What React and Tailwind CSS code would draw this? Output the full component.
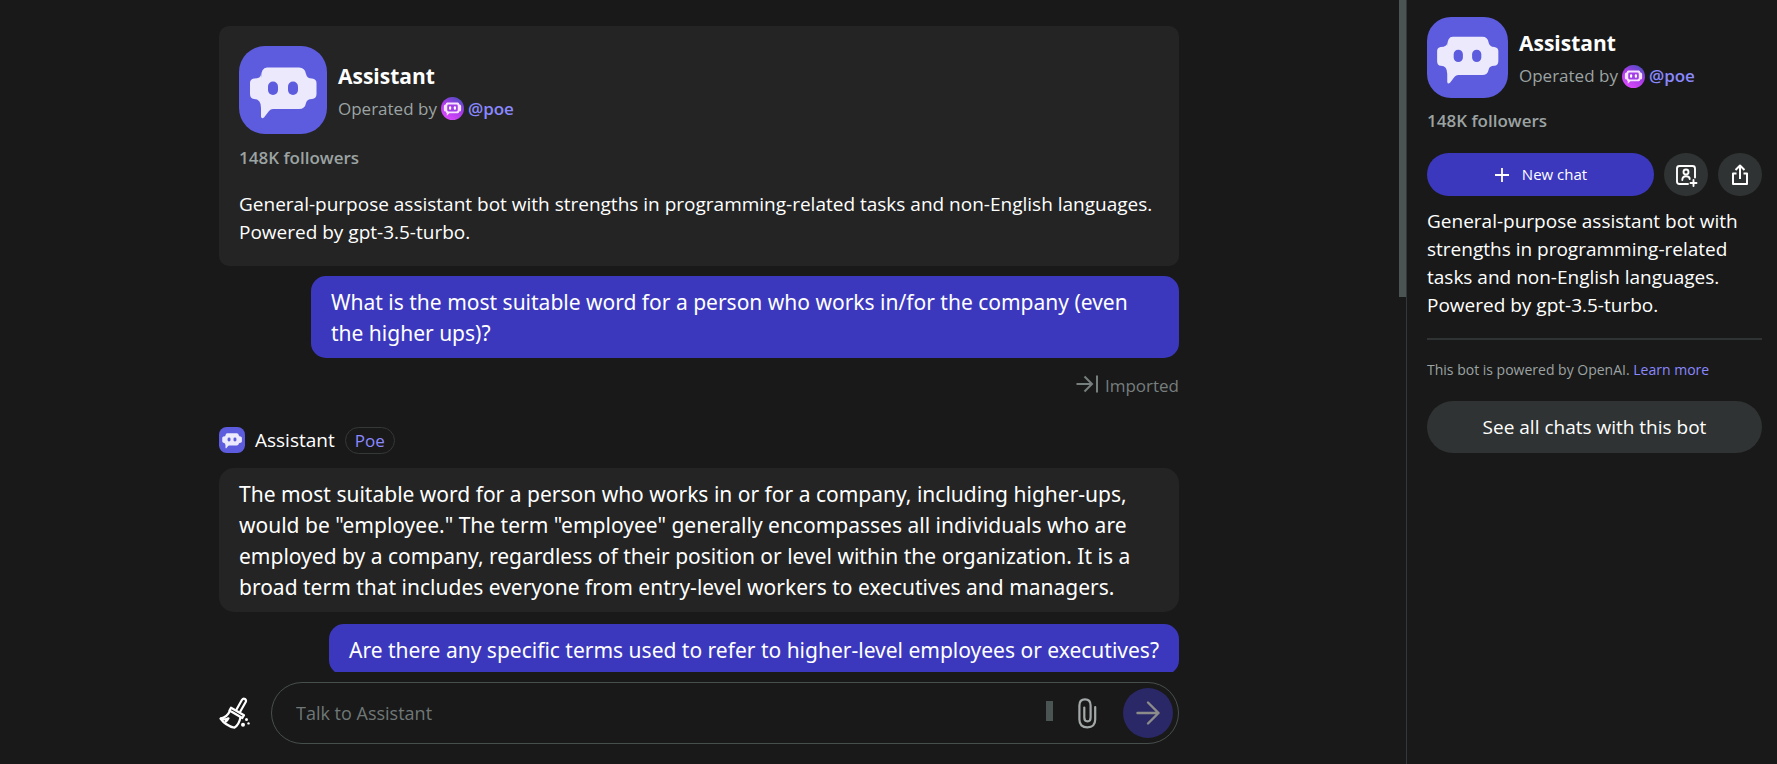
const face =
  "M22 32Q22 21.500 28 21.500H60Q66 21.500 67 28Q68 32.500 73 32.500Q77.500 33 77.500 37V48Q77.500 52.500 73 53Q68 53 67 57Q66 63 60 63H34Q31.500 63 30 65L25 71.500Q22.500 73.500 22 70.500V62Q22 53 15 53Q11 52.500 11 48V37Q11 33 15 32.500Q22 32.500 22 28Z";

function BotAvatar({ className }) {
  return (
    <svg viewBox="0 0 88 88" className={className} aria-hidden="true">
      <rect width="88" height="88" rx="26" fill="#5d5cde" />
      <path d={face} fill="#ebe9fb" />
      <rect x="29" y="35.500" width="10" height="13.500" rx="5" fill="#5d5cde" />
      <rect x="49" y="35.500" width="10" height="13.500" rx="5" fill="#5d5cde" />
    </svg>
  );
}

function PoeLogo() {
  return (
    <svg viewBox="0 0 24 24" className="h-[23px] w-[23px] shrink-0" aria-hidden="true">
      <defs>
        <linearGradient id="poe" x1="0.2" y1="1" x2="0.8" y2="0">
          <stop offset="0" stopColor="#e04bff" />
          <stop offset="0.55" stopColor="#a63be6" />
          <stop offset="1" stopColor="#4b4fc4" />
        </linearGradient>
      </defs>
      <circle cx="12" cy="12" r="12" fill="url(#poe)" />
      <path
        d="M6.500 5.800H17.500Q19 5.800 19 7.600Q21 8 21 9.500V13.500Q21 15 19 15.200Q19 17 17.500 17H8.800L6 19.500V17Q5 16.500 5 15.200Q3 15 3 13.500V9.500Q3 8 5 7.600Q5 5.800 6.500 5.800Z"
        fill="#f6e4ff"
      />
      <rect x="6.500" y="7.800" width="11" height="7.200" rx="1.500" fill="#a23fe6" />
      <rect x="8.400" y="9.600" width="2.200" height="3.600" rx="1" fill="#fff" />
      <rect x="13.400" y="9.600" width="2.200" height="3.600" rx="1" fill="#fff" />
    </svg>
  );
}

function BotHeader({ avatarClass }) {
  return (
    <div className="flex items-center gap-[11px]">
      <BotAvatar className={avatarClass} />
      <div className="pt-1">
        <h2 className="text-[21px] leading-[33px] font-bold text-white">Assistant</h2>
        <p className="flex items-center gap-1 text-[17px] leading-[32px] text-[#9ca3a3]">
          Operated by
          <PoeLogo />
          <a href="#poe" className="font-semibold text-[#8a88ff]">@poe</a>
        </p>
      </div>
    </div>
  );
}

function UserBubble({ children }) {
  return (
    <div className="ml-auto w-fit max-w-[868px] rounded-[15px] bg-[#3b38be] px-5 pt-[11px] pb-[9px] font-['Segoe_UI','Noto_Sans',sans-serif] text-[21px] leading-[31px] text-white">
      {children}
    </div>
  );
}

function BroomIcon() {
  return (
    <svg viewBox="0 0 32 32" className="h-8 w-8" fill="none" stroke="#fff" strokeWidth="2.200" strokeLinejoin="round" strokeLinecap="round" aria-hidden="true">
      <path d="M17.500 12.500L23 2.800Q24.200 1 26 2Q27.600 3.200 26.700 5L21.300 14.500" />
      <path d="M12 10.700L25 18.200L23.300 21L10.500 13.500Z" />
      <path d="M10.800 14C9 18.500 6 20.500 1.500 21.500C5 26.500 10 29.500 15.500 30.700C18.800 28.500 20.600 25 21.500 20.300" />
      <path d="M2 21.500Q6 23.500 9.500 21.300Q8.500 23.300 6.800 24.500" />
      <g fill="#fff" stroke="none">
        <circle cx="24" cy="27.800" r="2" />
        <circle cx="27.500" cy="22.500" r="1.500" />
        <circle cx="29.500" cy="26.400" r="1.200" />
      </g>
    </svg>
  );
}

export default function App() {
  return (
    <div className="flex h-screen overflow-hidden bg-[#191919] font-['Segoe_UI','Open_Sans',sans-serif] text-white">
      <main className="flex min-w-0 flex-1">
        <div className="flex min-w-0 flex-1 flex-col items-center pr-px">
          <div className="min-h-0 w-full max-w-[960px] flex-1 overflow-hidden pt-[26px]">
            <section className="rounded-[10px] bg-[#242424] p-5">
              <BotHeader avatarClass="h-[88px] w-[88px] shrink-0" />
              <p className="mt-[10px] text-[17px] leading-[28px] font-semibold text-[#9ca3a3]">148K followers</p>
              <p className="mt-[18px] text-[19px] leading-[28px]">
                General-purpose assistant bot with strengths in programming-related tasks and non-English languages. Powered by gpt-3.5-turbo.
              </p>
            </section>

            <div className="mt-[10px]">
              <UserBubble>
                What is the most suitable word for a person who works in/for the company (even the higher ups)?
              </UserBubble>
            </div>

            <p className="mt-[14px] flex items-center justify-end gap-[6px] text-[17px] leading-[28px] text-[#767e7e]">
              <svg viewBox="0 0 24 24" className="mb-1 h-6 w-6" fill="none" stroke="currentColor" strokeWidth="2" aria-hidden="true">
                <path d="M1.500 12H17M9.500 4.500L17 12L9.500 19.500M22 3.500V20.500" />
              </svg>
              Imported
            </p>

            <div className="mt-[26px] flex h-[28px] items-center gap-[10px]">
              <BotAvatar className="h-[26px] w-[26px]" />
              <span className="text-[19px] leading-[28px]">Assistant</span>
              <span className="rounded-full border border-[#353838] px-[9px] text-[17px] leading-[25px] text-[#8a88ff]">Poe</span>
            </div>

            <div className="mt-[14px] rounded-[15px] bg-[#242424] px-5 pt-[11px] pb-[9px] font-['Segoe_UI','Noto_Sans',sans-serif] text-[21px] leading-[31px]">
              The most suitable word for a person who works in or for a company, including higher-ups, would be "employee." The term "employee" generally encompasses all individuals who are employed by a company, regardless of their position or level within the organization. It is a broad term that includes everyone from entry-level workers to executives and managers.
            </div>

            <div className="mt-3">
              <UserBubble>Are there any specific terms used to refer to higher-level employees or executives?</UserBubble>
            </div>
          </div>

          <form className="flex w-full max-w-[960px] items-center gap-5 pt-[10px] pb-5" onSubmit={(e) => e.preventDefault()}>
            <button type="button" aria-label="Clear context" className="shrink-0">
              <BroomIcon />
            </button>
            <div className="flex h-[62px] min-w-0 flex-1 items-center rounded-full border border-[#474f4d] pr-[5px] pl-6">
              <input
                type="text"
                aria-label="Talk to Assistant"
                placeholder="Talk to Assistant"
                className="min-w-0 flex-1 bg-transparent text-[18px] outline-none placeholder:text-[#6f7777]"
              />
              <span className="mb-1 h-5 w-[7px] bg-[#4a5453]" />
              <button type="button" aria-label="Attach file" className="ml-6">
                <svg viewBox="0 0 20 32" className="h-8 w-5" fill="none" stroke="#a3a9a8" strokeWidth="2.200" strokeLinecap="round" aria-hidden="true">
                  <path d="M18.200 10V22.500Q18.200 30.300 10.500 30.300Q2.400 30.300 2.400 22.500V8.500Q2.400 2.300 8 2.300Q13.600 2.300 13.600 8.500V20.500Q13.600 24.300 10.500 24.300Q7.300 24.300 7.300 20.500V10.500" />
                </svg>
              </button>
              <button type="submit" aria-label="Send message" className="ml-[26px] flex h-[50px] w-[50px] shrink-0 items-center justify-center rounded-full bg-[#2a2866]">
                <svg viewBox="0 0 26 26" className="h-[26px] w-[26px]" fill="none" stroke="#8c8c8a" strokeWidth="2.400" strokeLinecap="round" strokeLinejoin="round" aria-hidden="true">
                  <path d="M2.500 13H23.500M13 2.500L23.500 13L13 23.500" />
                </svg>
              </button>
            </div>
          </form>
        </div>
        <div className="w-[7px] shrink-0">
          <div className="h-[297px] bg-[#4a5453]" />
        </div>
      </main>

      <aside className="w-[371px] shrink-0 border-l border-[#353838] pt-[17px] pr-[15px] pl-5">
        <BotHeader avatarClass="h-[81px] w-[81px] shrink-0" />
        <p className="mt-[9px] text-[17px] leading-[28px] font-semibold text-[#9ca3a3]">148K followers</p>
        <div className="mt-[18px] flex items-center gap-[10px]">
          <button type="button" className="flex h-[43px] flex-1 items-center justify-center gap-3 rounded-full bg-[#3b38be] text-[15px] text-white">
            <svg viewBox="0 0 16 16" className="h-4 w-4" stroke="currentColor" strokeWidth="1.800" aria-hidden="true">
              <path d="M8 1V15M1 8H15" />
            </svg>
            New chat
          </button>
          <button type="button" aria-label="Follow" className="flex h-[43px] w-[44px] items-center justify-center rounded-full bg-[#303333]">
            <svg viewBox="0 0 24 24" className="h-6 w-6" fill="none" stroke="#fff" strokeWidth="1.900" strokeLinecap="round" strokeLinejoin="round" aria-hidden="true">
              <path d="M14 21H5.500Q3 21 3 18.500V5.500Q3 3 5.500 3H18.500Q21 3 21 5.500V14.500" />
              <circle cx="12" cy="9" r="2.500" />
              <path d="M8.300 17Q8.300 13.200 12 13.200Q15.700 13.200 15.700 16M19.500 17V23M16.500 20H22.500" />
            </svg>
          </button>
          <button type="button" aria-label="Share" className="flex h-[43px] w-[44px] items-center justify-center rounded-full bg-[#303333]">
            <svg viewBox="0 0 24 24" className="h-6 w-6" fill="none" stroke="#fff" strokeWidth="2" strokeLinejoin="round" aria-hidden="true">
              <path d="M8.500 10.500H5V21H19V10.500H15.500M12 16V3M7.500 7L12 2.500L16.500 7" />
            </svg>
          </button>
        </div>
        <p className="mt-[11px] text-[19px] leading-[28px]">
          General-purpose assistant bot with strengths in programming-related tasks and non-English languages. Powered by gpt-3.5-turbo.
        </p>
        <hr className="mt-[19px] border-t-2 border-[#303333]" />
        <p className="mt-[18px] text-[14px] leading-[24px] text-[#9ca3a3]">
          This bot is powered by OpenAI. <a href="#learn" className="text-[#8a88ff]">Learn more</a>
        </p>
        <button type="button" className="mt-[19px] h-[52px] w-full rounded-full bg-[#303333] text-[19px] text-white">
          See all chats with this bot
        </button>
      </aside>
    </div>
  );
}
